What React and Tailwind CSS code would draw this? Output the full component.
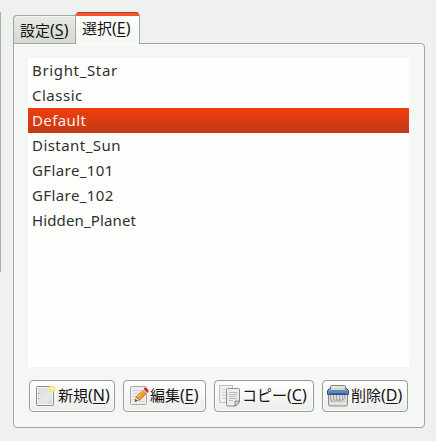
import React from 'react';

const rows = [
  { name: 'Bright_Star', tracking: 'tracking-[0.65px]' },
  { name: 'Classic', tracking: 'tracking-[0.5px]' },
  { name: 'Default', tracking: 'tracking-[0.4px]', selected: true },
  { name: 'Distant_Sun', tracking: 'tracking-[0.45px]' },
  { name: 'GFlare_101', tracking: 'tracking-[0.4px]' },
  { name: 'GFlare_102', tracking: 'tracking-[0.4px]' },
  { name: 'Hidden_Planet', tracking: 'tracking-[0.13px]' },
];

function NewIcon() {
  return (
    <svg width="22" height="24" viewBox="0 0 22 24" className="shrink-0">
      <defs>
        <linearGradient id="paper" x2="1" y2="1">
          <stop offset="0" stopColor="#d9dbd8" />
          <stop offset=".6" stopColor="#e6e8e5" />
          <stop offset="1" stopColor="#d2d4d1" />
        </linearGradient>
      </defs>
      <rect x="1.5" y="2.5" width="17" height="19" rx="1" fill="url(#paper)" stroke="#8b8d88" />
      <rect x="2.5" y="3.5" width="15" height="17" fill="none" stroke="#f4f5f3" />
      <path d="M3 9.500h1M3 14.500h1" stroke="#777" />
      <circle cx="17" cy="5" r="3.500" fill="#f7e98a" />
      <circle cx="17" cy="5" r="2.200" fill="#fdfae0" stroke="#f2dc58" />
    </svg>
  );
}

function EditIcon() {
  return (
    <svg width="22" height="24" viewBox="0 0 22 24" className="shrink-0">
      <rect x="1.500" y="2.500" width="16" height="18" rx="1" fill="#eeefed" stroke="#a9aba7" />
      <path d="M4 6.500h8M4 9.500h6M4 12.500h4M4 15.500h3M12 17.500h4" stroke="#cdcfcc" />
      <path d="M6 17.500l1.300-4.600 3.300 3.300z" fill="#f5dfad" stroke="#806a49" strokeWidth=".6" />
      <path d="M6 17.500l.7-2.200 1.500 1.500z" fill="#222" />
      <path d="M7.300 12.900l6.500-6.500 3.400 3.300-6.600 6.500z" fill="#f29a2e" stroke="#b86817" strokeWidth=".8" />
      <path d="M8.500 12.900l6-5.800" stroke="#ffd07b" />
      <path d="M13.800 6.400l1.500-1.500 3.400 3.300-1.500 1.500z" fill="#b9bec4" />
      <path d="M15 4.700c1.800-1.900 5.200 1.300 3.600 3.500z" fill="#e2282c" stroke="#c92228" />
    </svg>
  );
}

function CopyIcon() {
  return (
    <svg width="22" height="24" viewBox="0 0 22 24" className="shrink-0">
      <rect x=".5" y="1.500" width="13" height="17" fill="#f0f1ef" stroke="#c0c2be" />
      <path d="M3 5.500h8M3 8.500h5M3 11.500h4M3 14.500h4" stroke="#d3d5d2" />
      <path d="M8.500 4.500h11a1 1 0 0 1 1 1v11l-4.500 5.500h-7.500a1 1 0 0 1-1-1v-15.500a1 1 0 0 1 1-1z" fill="#eceeeb" stroke="#8d8f8b" />
      <path d="M10 8.500h8.500M10 10.500h8.500M10 12.500h7M10 14.500h8M10 16.500h4" stroke="#bbbdba" />
      <path d="M15.500 22c1-1.500 1-3 .5-5 1.500.5 3 .5 4.500-.5 0 2.500-2.500 5-5 5.500z" fill="#dcdedb" stroke="#777975" />
    </svg>
  );
}

function ShredIcon() {
  return (
    <svg width="24" height="24" viewBox="0 0 24 24" className="shrink-0">
      <path d="M2.500 10v10.500a1.500 1.500 0 0 0 1.500 1.500h16a1.500 1.500 0 0 0 1.500-1.500v-10.500z" fill="#d9dbd8" stroke="#8b8d89" />
      <path d="M4.500 11v5l1.500 2 1.500-3 2 3 1.500-3 1.500 3 1.500-3 1.500 2.500 3-3v-4M7.500 11v5M10.500 11v6M13.500 11v6M16.500 11v5" fill="none" stroke="#a5a7a4" />
      <path d="M4 19.500h16" stroke="#eceeeb" />
      <path d="M3.500 4.500h17l2 2v4h-21v-4z" fill="#528ad0" stroke="#285591" />
      <path d="M3 6.500h18.500" stroke="#80abe1" />
      <path d="M3.500 9.500h17" stroke="#2f62a0" />
      <rect x="4.500" y="1.500" width="15" height="5" rx="1" fill="#d5d7d3" stroke="#81837f" />
      <path d="M6 3h12" stroke="#f1f2f0" />
      <rect x="20" y="7" width="1.500" height="1.500" fill="#d74949" />
    </svg>
  );
}

function Label({ text, k }) {
  return (
    <span className="whitespace-nowrap text-[15px] leading-[20px] text-[#151515]">
      {text}
      <span className="text-[16px]">
        (<span className="underline decoration-1 underline-offset-[2px]">{k}</span>)
      </span>
    </span>
  );
}

function Button({ icon, text, k, width, pad = 'pl-[5px]', labelMargin = 'ml-px' }) {
  return (
    <button
      className={`flex h-8 items-center rounded-[4px] border border-[#999c97] bg-linear-to-b from-white to-[#eceeeb] shadow-[inset_0_0_0_1px_#fafbf9] ${pad} ${width}`}
    >
      {icon}
      <span className={`-mt-[3px] flex ${labelMargin}`}>
        <Label text={text} k={k} />
      </span>
    </button>
  );
}

export default function App() {
  return (
    <div className="flex h-[441px] w-[436px] overflow-hidden bg-[#eff1ee] font-['Noto_Sans','Noto_Sans_CJK_JP',sans-serif]">
      <div className="mt-3 h-[260px] w-px shrink-0 bg-[#a5b0a7]" />
      <main className="ml-3 mt-3 w-[412px] shrink-0">
        <div className="flex h-8 items-end">
          <div className="flex h-[29px] w-[62px] items-center rounded-tl-[4px] border border-r-0 border-[#9ca8a0] bg-linear-to-b from-[#e7e9e5] to-[#d5d9d2] pl-[6px] shadow-[inset_0_1px_0_#f5f6f4]">
            <Label text="設定" k="S" />
          </div>
          <div className="relative z-10 h-8 w-[65px] overflow-hidden rounded-t-[4px] border-x border-[#9ca8a0] bg-linear-to-b from-white to-[#f5f7f4]">
            <div className="h-1 border-t border-[#a94529] bg-[#f3522a]" />
            <div className="flex h-[24px] items-center pl-[6px]">
              <Label text="選択" k="E" />
            </div>
          </div>
        </div>
        <section className="-mt-px h-[385px] rounded-b-[4px] rounded-tr-[4px] border border-[#9ca8a0] bg-[#f5f7f5] pl-[14px] pt-[14px] shadow-[inset_1px_1px_0_#fff]">
          <div className="h-[309px] w-[381px] bg-[#fefefd]">
            {rows.map((row) => (
              <div
                key={row.name}
                className={`flex h-[25px] items-center pl-1 text-[15px] leading-[25px] ${row.tracking} ${
                  row.selected ? 'bg-linear-to-b from-[#f13d0c] to-[#c23a17] text-[#fff0e9]' : 'text-[#303030]'
                }`}
              >
                {row.name}
              </div>
            ))}
          </div>
          <div className="ml-px mt-[13px] flex gap-2">
            <Button icon={<NewIcon />} text="新規" k="N" width="w-[86px]" />
            <Button icon={<EditIcon />} text="編集" k="E" width="w-[83px]" labelMargin="ml-[-1px]" />
            <Button icon={<CopyIcon />} text="コピー" k="C" width="w-[100px]" pad="pl-[4px]" />
            <Button icon={<ShredIcon />} text="削除" k="D" width="w-[86px]" pad="pl-[3px]" labelMargin="ml-px" />
          </div>
        </section>
      </main>
    </div>
  );
}
